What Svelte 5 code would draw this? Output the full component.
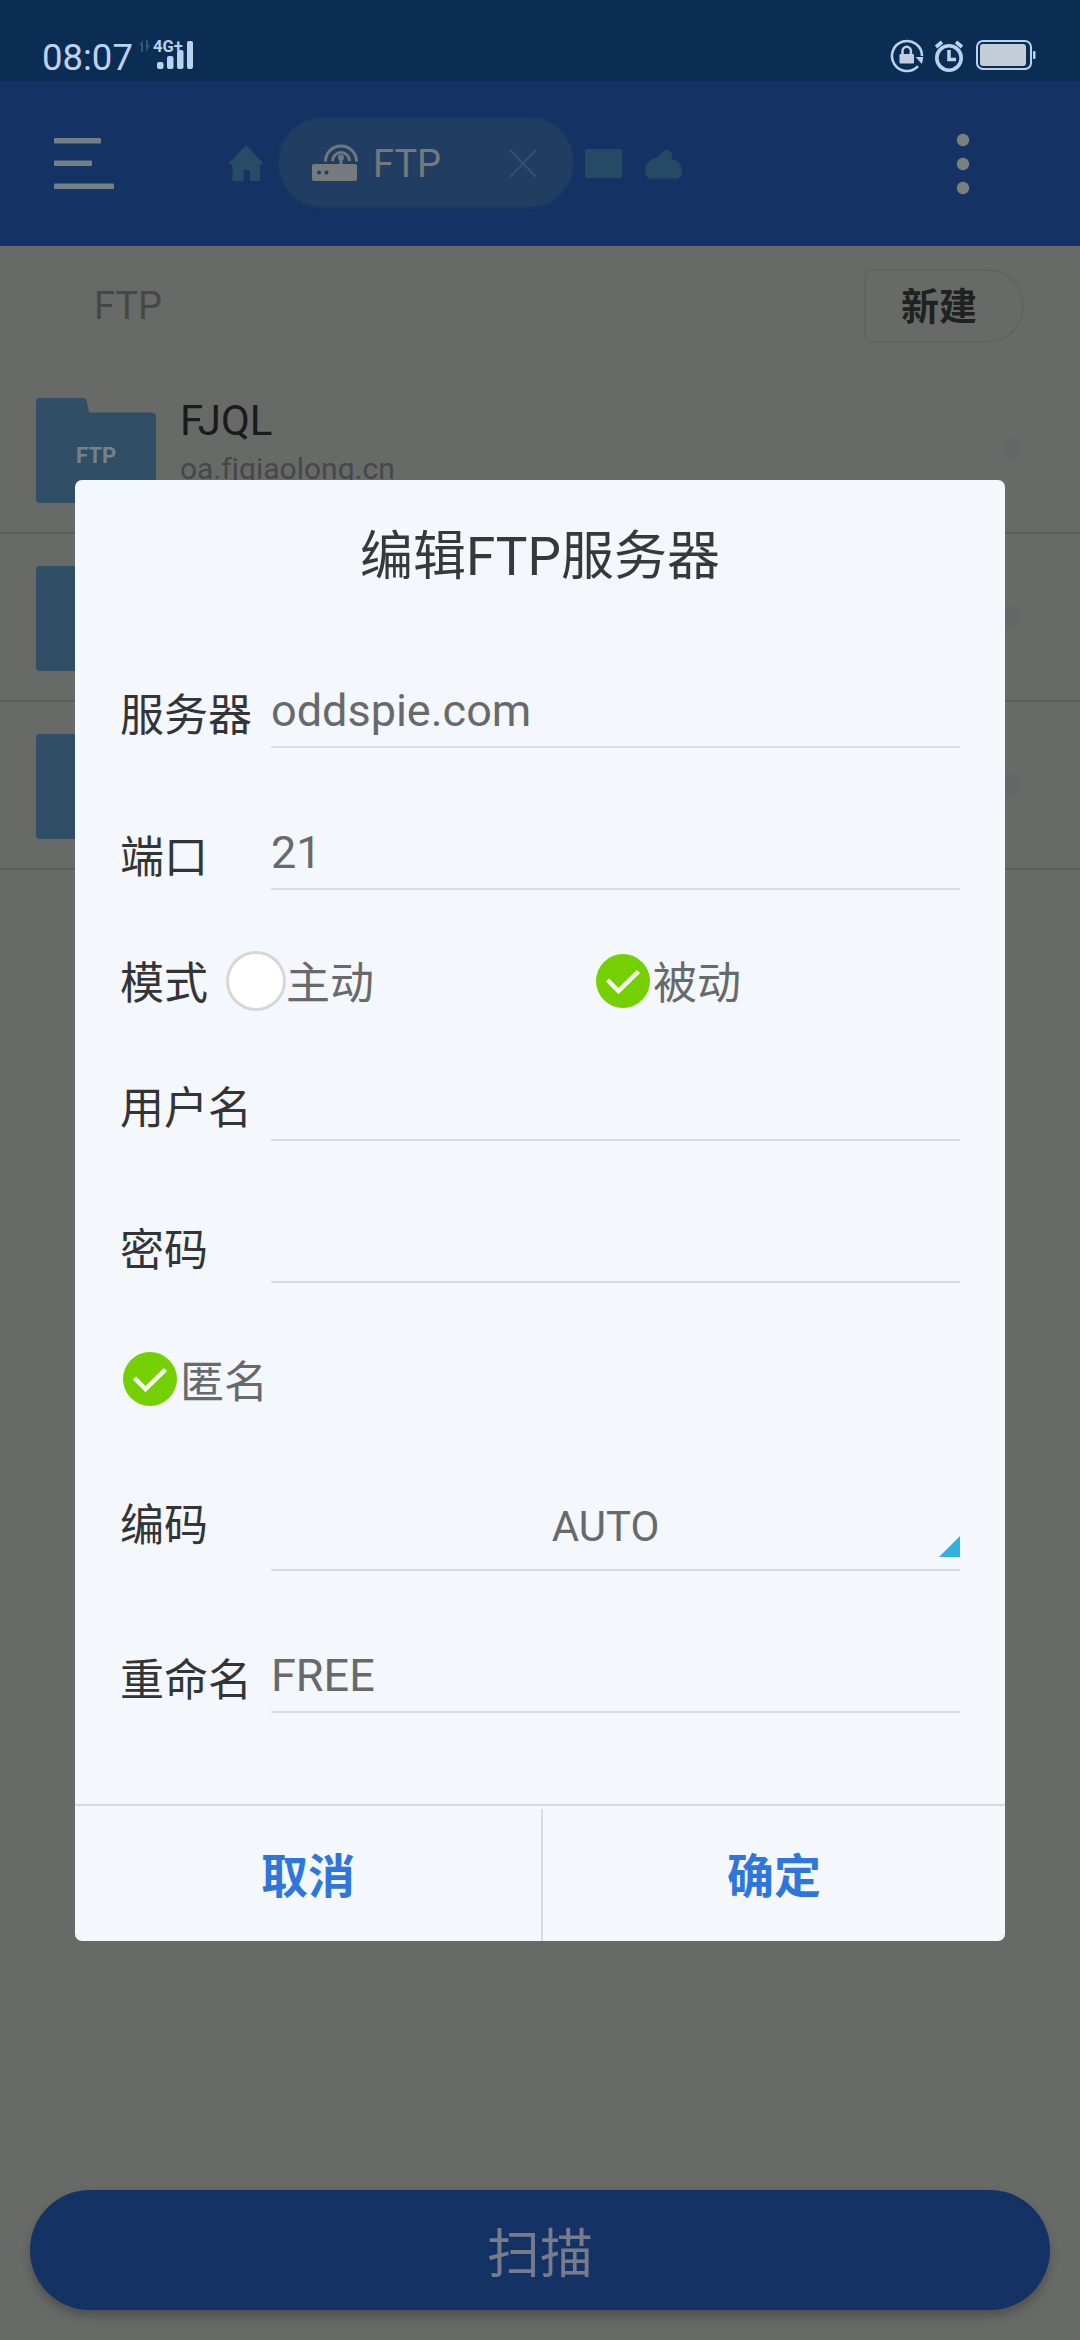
<script>
	const servers = [
		{ name: 'FJQL', host: 'oa.fjqiaolong.cn' },
		{ name: '', host: '' },
		{ name: '', host: '' }
	];

	let passive = true;
	let anonymous = true;
</script>

{#snippet check(on)}
	{#if on}
		<svg class="check" width="60" height="60" viewBox="0 0 60 60">
			<circle cx="30" cy="30" r="27" fill="#74d000" />
			<path d="M14.500 29l11 11L45.500 20.500" fill="none" stroke="#f7fbf2" stroke-width="4.500" />
		</svg>
	{:else}
		<svg class="check" width="60" height="60" viewBox="0 0 60 60">
			<circle cx="30" cy="30" r="28.500" fill="#fff" stroke="#d6d7da" stroke-width="3" />
		</svg>
	{/if}
{/snippet}

<div class="screen">
	<div class="status">
		<span class="time">08:07</span>
		<svg class="network" width="60" height="36" viewBox="0 0 60 36">
			<g fill="#38536f">
				<path d="M5 3v12H3V8H1zM8 3h2v5h2l-4 7z" />
			</g>
			<text x="15" y="14.500" font-size="16.500" font-weight="700" fill="#b9d3ee">4G+</text>
			<g fill="#b9d3ee">
				<rect x="19" y="25" width="6.500" height="7" rx="2" />
				<rect x="29" y="19" width="6.500" height="13" rx="2" />
				<rect x="39" y="13" width="6.500" height="19" rx="2" />
				<rect x="49" y="4" width="6" height="28" rx="2" />
			</g>
		</svg>
		<div class="indicators">
			<svg width="34" height="34" viewBox="0 0 34 34">
				<path d="M28 27.200A15 15 0 1 1 32 17" fill="none" stroke="#b9d3ee" stroke-width="2.600" />
				<path d="M25.500 18h7.800l-1.300 7z" fill="#b9d3ee" />
				<path d="M12.500 16v-4a4.200 4.200 0 0 1 8.400 0v4" fill="none" stroke="#c3cfdf" stroke-width="2.500" />
				<rect x="9.500" y="15" width="14.500" height="9.500" rx="1" fill="#c3cfdf" />
			</svg>
			<svg class="alarm" width="30" height="34" viewBox="0 0 30 34">
				<circle cx="15" cy="19" r="12.200" fill="none" stroke="#b9d3ee" stroke-width="3.600" />
				<path d="M2 8l6-5M28 8l-6-5" fill="none" stroke="#b9d3ee" stroke-width="3.600" />
				<path d="M15 11v9.500h7" fill="none" stroke="#b9d3ee" stroke-width="3.600" />
			</svg>
			<svg width="62" height="32" viewBox="0 0 62 32">
				<rect x="2" y="2" width="54" height="28" rx="6" fill="none" stroke="#b9d3ee" stroke-width="2" />
				<rect x="5" y="5" width="46" height="22" rx="3" fill="#c5cddb" />
				<rect x="58" y="12" width="2.500" height="8" rx="1" fill="#b9d3ee" />
			</svg>
		</div>
	</div>

	<div class="toolbar">
		<svg class="menu" width="62" height="52" viewBox="0 0 62 52" fill="#748087">
			<rect y="0" width="47" height="5.500" rx="1" />
			<rect y="22.500" width="38" height="5.500" rx="1" />
			<rect y="45.500" width="60" height="5.500" rx="1" />
		</svg>
		<svg class="home" width="34" height="37" viewBox="0 0 34 37">
			<path d="M17 0l17 18-2 2h-1v16H21V25h-6.500v11H3.500V20h-1L0 18z" fill="#284c66" />
		</svg>
		<div class="tab">
			<svg width="46" height="38" viewBox="0 0 46 38">
				<g fill="none" stroke="#71777d" stroke-width="3">
					<path d="M13.500 17.500a15 15 0 0 1 31 0" />
					<path d="M20.500 17a8.500 8.500 0 0 1 17 0" />
					<path d="M29 13v8" />
				</g>
				<circle cx="29" cy="13.500" r="3" fill="#71777d" />
				<rect x="0" y="20" width="45" height="17" rx="2" fill="#777a7d" />
				<circle cx="7" cy="28.500" r="2" fill="#213e62" />
				<circle cx="14.500" cy="28.500" r="2" fill="#213e62" />
			</svg>
			<span>FTP</span>
			<svg class="close" width="28" height="32" viewBox="0 0 28 32">
				<path d="M1 3l26 27M27 3L1 30" stroke="#354f70" stroke-width="2" />
			</svg>
		</div>
		<svg class="mini" width="37" height="29" viewBox="0 0 37 29">
			<rect width="37" height="29" rx="2" fill="#264965" />
		</svg>
		<svg class="cloud" width="37" height="30" viewBox="0 0 37 30">
			<path d="M6 29.500C2 29.500 0 26 0 21c0-5 3-9 8-11 5-1 7-6 11-8 3-2 7-1 8 4v4c6 1 10 6 10 12 0 5-2 7.500-6 7.500z" fill="#264965" />
		</svg>
		<svg class="more" width="14" height="62" viewBox="0 0 14 62" fill="#7c7f80">
			<circle cx="7" cy="7" r="6.200" />
			<circle cx="7" cy="31" r="6.200" />
			<circle cx="7" cy="55" r="6.200" />
		</svg>
	</div>

	<div class="section">
		<span>FTP</span>
		<button class="create">新建</button>
	</div>

	<div class="list">
		{#each servers as server}
			<div class="item">
				<svg width="120" height="105" viewBox="0 0 120 105">
					<path d="M4 0h43q4 0 4 4l2 10.500h63q4 0 4 4V101q0 4-4 4H4q-4 0-4-4V4q0-4 4-4z" fill="#304f66" />
					<text x="40" y="65" font-size="22" font-weight="700" fill="#74828c">FTP</text>
				</svg>
				<div class="info">
					<div class="name">{server.name}</div>
					<div class="host">{server.host}</div>
				</div>
				<i class="arrow"></i>
			</div>
		{/each}
	</div>

	<button class="scan">扫描</button>

	<div class="overlay">
		<div class="dialog" role="dialog" aria-labelledby="dialog-title">
			<h1 id="dialog-title">编辑FTP服务器</h1>
			<div class="form">
				<div class="row">
					<span class="label">服务器</span>
					<div class="value">oddspie.com</div>
				</div>
				<div class="row gap">
					<span class="label">端口</span>
					<div class="value">21</div>
				</div>
				<div class="options mode">
					<span class="label">模式</span>
					<div class="option">{@render check(!passive)}<span>主动</span></div>
					<div class="option">{@render check(passive)}<span>被动</span></div>
				</div>
				<div class="row">
					<span class="label">用户名</span>
					<div class="value"></div>
				</div>
				<div class="row gap">
					<span class="label">密码</span>
					<div class="value"></div>
				</div>
				<div class="options anonymous">
					<div class="option">{@render check(anonymous)}<span>匿名</span></div>
				</div>
				<div class="row encoding">
					<span class="label">编码</span>
					<div class="value select">AUTO</div>
				</div>
				<div class="row gap">
					<span class="label">重命名</span>
					<div class="value">FREE</div>
				</div>
			</div>
			<div class="actions">
				<button>取消</button>
				<span class="split"></span>
				<button>确定</button>
			</div>
		</div>
	</div>
</div>

<style>
	:global(body) {
		background: #686a68;
	}

	.screen {
		position: relative;
		display: flex;
		flex-direction: column;
		width: 1080px;
		height: 2340px;
		overflow: hidden;
		background: #686a68;
		font-family: Roboto, 'Noto Sans CJK SC', sans-serif;
		box-sizing: border-box;
	}

	svg {
		display: block;
		flex: none;
	}

	button {
		padding: 0;
		border: none;
		background: none;
		font-family: inherit;
	}

	.status {
		display: flex;
		align-items: flex-start;
		height: 81px;
		padding: 0 43px 0 42px;
		background: #0b2d53;
		box-sizing: border-box;
	}

	.time {
		width: 96px;
		margin-top: 37px;
		font-size: 36.500px;
		line-height: 42px;
		color: #bdd2f0;
	}

	.network {
		margin-top: 37px;
	}

	.indicators {
		display: flex;
		align-items: flex-start;
		margin: 39px 0 0 auto;
	}

	.alarm {
		margin: 0 11px 0 10px;
	}

	.toolbar {
		display: flex;
		align-items: center;
		height: 165px;
		padding: 0 110px 0 54px;
		background: #143364;
		box-sizing: border-box;
	}

	.home {
		margin-left: 113px;
	}

	.tab {
		display: flex;
		align-items: center;
		width: 294px;
		height: 89px;
		margin: 0 12px 2px 16px;
		padding: 0 36px 0 33px;
		border-radius: 46px;
		background: #213e62;
		box-shadow: 0 0 4px #213e62;
		box-sizing: border-box;
	}

	.tab span {
		margin: 2px 0 0 15px;
		font-size: 38px;
		color: #75797e;
	}

	.close {
		margin-left: auto;
	}

	.cloud {
		margin-left: 23px;
	}

	.more {
		margin-left: auto;
	}

	.section {
		display: flex;
		align-items: flex-start;
		justify-content: space-between;
		height: 120px;
		padding: 23px 56px 0 94px;
		color: #464848;
		font-size: 38px;
		line-height: 74px;
		box-sizing: border-box;
	}

	.create {
		width: 160px;
		height: 74px;
		padding-right: 10px;
		border: 2px solid #626463;
		border-radius: 8px 37px 37px 8px;
		font-size: 38px;
		font-weight: 700;
		line-height: 72px;
		color: #202222;
	}

	.item {
		display: flex;
		height: 168px;
		padding: 32px 60px 0 36px;
		border-bottom: 2px solid #5c5e5e;
		box-sizing: border-box;
	}

	.info {
		flex: 1;
		margin: -3px 0 0 24px;
	}

	.name {
		height: 52px;
		font-size: 42px;
		line-height: 52px;
		color: #191b1c;
	}

	.host {
		margin-top: 4px;
		font-size: 30px;
		line-height: 36px;
		color: #454748;
	}

	.arrow {
		width: 16px;
		height: 20px;
		margin-top: 41px;
		border-radius: 6px;
		background: #646668;
	}

	.scan {
		height: 120px;
		margin: auto 30px 30px;
		border-radius: 60px;
		background: #143364;
		box-shadow: 0 6px 10px rgba(40, 48, 44, 0.4);
		font-size: 53px;
		color: #777c8c;
	}

	.overlay {
		position: absolute;
		inset: 81px 0 0;
		display: flex;
		align-items: center;
		justify-content: center;
	}

	.dialog {
		display: flex;
		flex-direction: column;
		width: 930px;
		height: 1461px;
		border-radius: 7px;
		background: #f4f7fc;
	}

	h1 {
		height: 162px;
		margin: 0;
		font-size: 53px;
		font-weight: 400;
		line-height: 155px;
		text-align: center;
		color: #37383a;
	}

	.form {
		flex: 1;
		padding: 0 45px;
	}

	.row {
		display: flex;
		height: 106px;
	}

	.gap {
		margin-top: 36px;
	}

	.label {
		width: 151px;
		font-size: 44px;
		line-height: 149px;
		color: #333436;
		white-space: nowrap;
	}

	.value {
		flex: 1;
		border-bottom: 2px solid #d9dce0;
		font-size: 45px;
		line-height: 137px;
		color: #67696b;
		box-sizing: border-box;
	}

	.options {
		display: flex;
		align-items: center;
		height: 109px;
		padding-top: 36px;
	}

	.options .label {
		width: 106px;
		padding-top: 7px;
		line-height: 60px;
	}

	.option {
		display: flex;
		align-items: center;
		width: 367px;
		font-size: 44px;
		line-height: 60px;
		color: #67696b;
	}

	.option span {
		padding-top: 7px;
	}

	.anonymous {
		height: 120px;
	}

	.encoding {
		height: 132px;
	}

	.encoding .label {
		line-height: 175px;
	}

	.select {
		position: relative;
		padding-right: 20px;
		font-size: 42px;
		line-height: 175px;
		text-align: center;
	}

	.select::after {
		content: '';
		position: absolute;
		right: 0;
		bottom: 12px;
		border-left: 21px solid transparent;
		border-bottom: 21px solid #33b0dc;
	}

	.actions {
		display: flex;
		height: 137px;
		border-top: 2px solid #d5dadd;
		box-sizing: border-box;
	}

	.actions button {
		width: 466px;
		font-size: 47px;
		font-weight: 700;
		line-height: 142px;
		color: #2e76dc;
	}

	.actions button:last-child {
		width: 462px;
	}

	.split {
		width: 2px;
		margin-top: 3px;
		background: #d9dddf;
	}
</style>
